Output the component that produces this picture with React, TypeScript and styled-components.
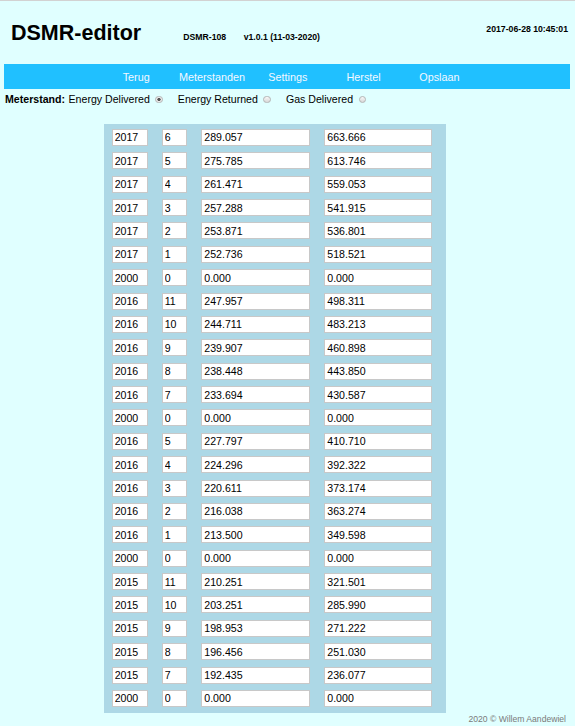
import React from "react";
import styled, { createGlobalStyle } from "styled-components";

const Global = createGlobalStyle`
  html, body {
    margin: 0;
    padding: 0;
    background: #e0ffff;
    font-family: "Liberation Sans", Arial, Helvetica, sans-serif;
  }
  body { border-top: 1px solid #d2d2d2; min-height: 725px; }
`;

const Page = styled.div`
  width: 575px;
  display: flex;
  flex-direction: column;
`;

const Header = styled.header`
  display: flex;
  align-items: flex-start;
  height: 63px;
  padding: 0 7px 0 11px;
  box-sizing: border-box;
`;

const Title = styled.h1`
  margin: 21.5px 0 0 0;
  font-size: 21.5px;
  line-height: 1;
  font-weight: bold;
  color: #000;
`;

const Info = styled.span<{ $gap: number }>`
  margin: 31.7px 0 0 ${(p) => p.$gap}px;
  font-size: 8.7px;
  line-height: 1;
  font-weight: bold;
`;

const DateTime = styled.span`
  margin: 23.6px 0 0 auto;
  font-size: 8.7px;
  line-height: 1;
  font-weight: bold;
`;

const Nav = styled.nav`
  display: flex;
  align-items: center;
  height: 25.3px;
  margin: 0 5px 0 4px;
  padding-left: 94.3px;
  background: #20c0ff;
`;

const NavItem = styled.a`
  width: 75.8px;
  text-align: center;
  font-size: 10.8px;
  color: #f4f8ff;
  text-decoration: none;
  white-space: nowrap;
`;

const RadioRow = styled.div`
  display: flex;
  align-items: center;
  height: 19px;
  padding-left: 5px;
  font-size: 10.6px;
  color: #000;
`;

const Label = styled.span`
  font-weight: bold;
  margin-right: 3.5px;
`;

const Radio = styled.input`
  appearance: none;
  -webkit-appearance: none;
  width: 7.5px;
  height: 7.5px;
  margin: 1px 15px 0 5.5px;
  border: 1px solid #b4b4b4;
  border-radius: 50%;
  box-sizing: border-box;
  background: linear-gradient(#f8f8f8, #d8d8d8);
  &:checked {
    background: radial-gradient(circle, #555 0, #555 1.4px, #ececec 1.9px);
  }
`;

const Panel = styled.div`
  margin: 15.7px 0 0 104px;
  width: 342px;
  box-sizing: border-box;
  padding: 5px 0 5.7px 7.7px;
  background: #add8e6;
  display: grid;
  grid-template-columns: 36px 25.6px 109px 108px;
  column-gap: 14px;
  row-gap: 6.375px;
`;

const Field = styled.input`
  height: 17px;
  width: 100%;
  box-sizing: border-box;
  margin: 0;
  padding: 0 0 0 2px;
  border: 1px solid #c8c8c8;
  background: #fff;
  font-family: "Liberation Sans", Arial, Helvetica, sans-serif;
  font-size: 10.6px;
  color: #000;
  outline: none;
`;

const Footer = styled.footer`
  text-align: right;
  padding-right: 9px;
  margin-top: 1.5px;
  font-size: 8.6px;
  color: #7a7a7a;
`;

const rows: [string, string, string, string][] = [
  ["2017", "6", "289.057", "663.666"],
  ["2017", "5", "275.785", "613.746"],
  ["2017", "4", "261.471", "559.053"],
  ["2017", "3", "257.288", "541.915"],
  ["2017", "2", "253.871", "536.801"],
  ["2017", "1", "252.736", "518.521"],
  ["2000", "0", "0.000", "0.000"],
  ["2016", "11", "247.957", "498.311"],
  ["2016", "10", "244.711", "483.213"],
  ["2016", "9", "239.907", "460.898"],
  ["2016", "8", "238.448", "443.850"],
  ["2016", "7", "233.694", "430.587"],
  ["2000", "0", "0.000", "0.000"],
  ["2016", "5", "227.797", "410.710"],
  ["2016", "4", "224.296", "392.322"],
  ["2016", "3", "220.611", "373.174"],
  ["2016", "2", "216.038", "363.274"],
  ["2016", "1", "213.500", "349.598"],
  ["2000", "0", "0.000", "0.000"],
  ["2015", "11", "210.251", "321.501"],
  ["2015", "10", "203.251", "285.990"],
  ["2015", "9", "198.953", "271.222"],
  ["2015", "8", "196.456", "251.030"],
  ["2015", "7", "192.435", "236.077"],
  ["2000", "0", "0.000", "0.000"],
];

const navItems = ["Terug", "Meterstanden", "Settings", "Herstel", "Opslaan"];

export default function App() {
  return (
    <Page>
      <Global />
      <Header>
        <Title>DSMR-editor</Title>
        <Info $gap={42}>DSMR-108</Info>
        <Info $gap={17.5}>v1.0.1 (11-03-2020)</Info>
        <DateTime>2017-06-28 10:45:01</DateTime>
      </Header>
      <Nav>
        {navItems.map((n) => (
          <NavItem key={n}>{n}</NavItem>
        ))}
      </Nav>
      <RadioRow>
        <Label>Meterstand:</Label>
        Energy Delivered
        <Radio type="radio" name="m" defaultChecked />
        Energy Returned
        <Radio type="radio" name="m" />
        Gas Delivered
        <Radio type="radio" name="m" />
      </RadioRow>
      <Panel>
        {rows.map((r, i) =>
          r.map((v, j) => <Field key={`${i}-${j}`} value={v} readOnly />)
        )}
      </Panel>
      <Footer>2020 © Willem Aandewiel</Footer>
    </Page>
  );
}
